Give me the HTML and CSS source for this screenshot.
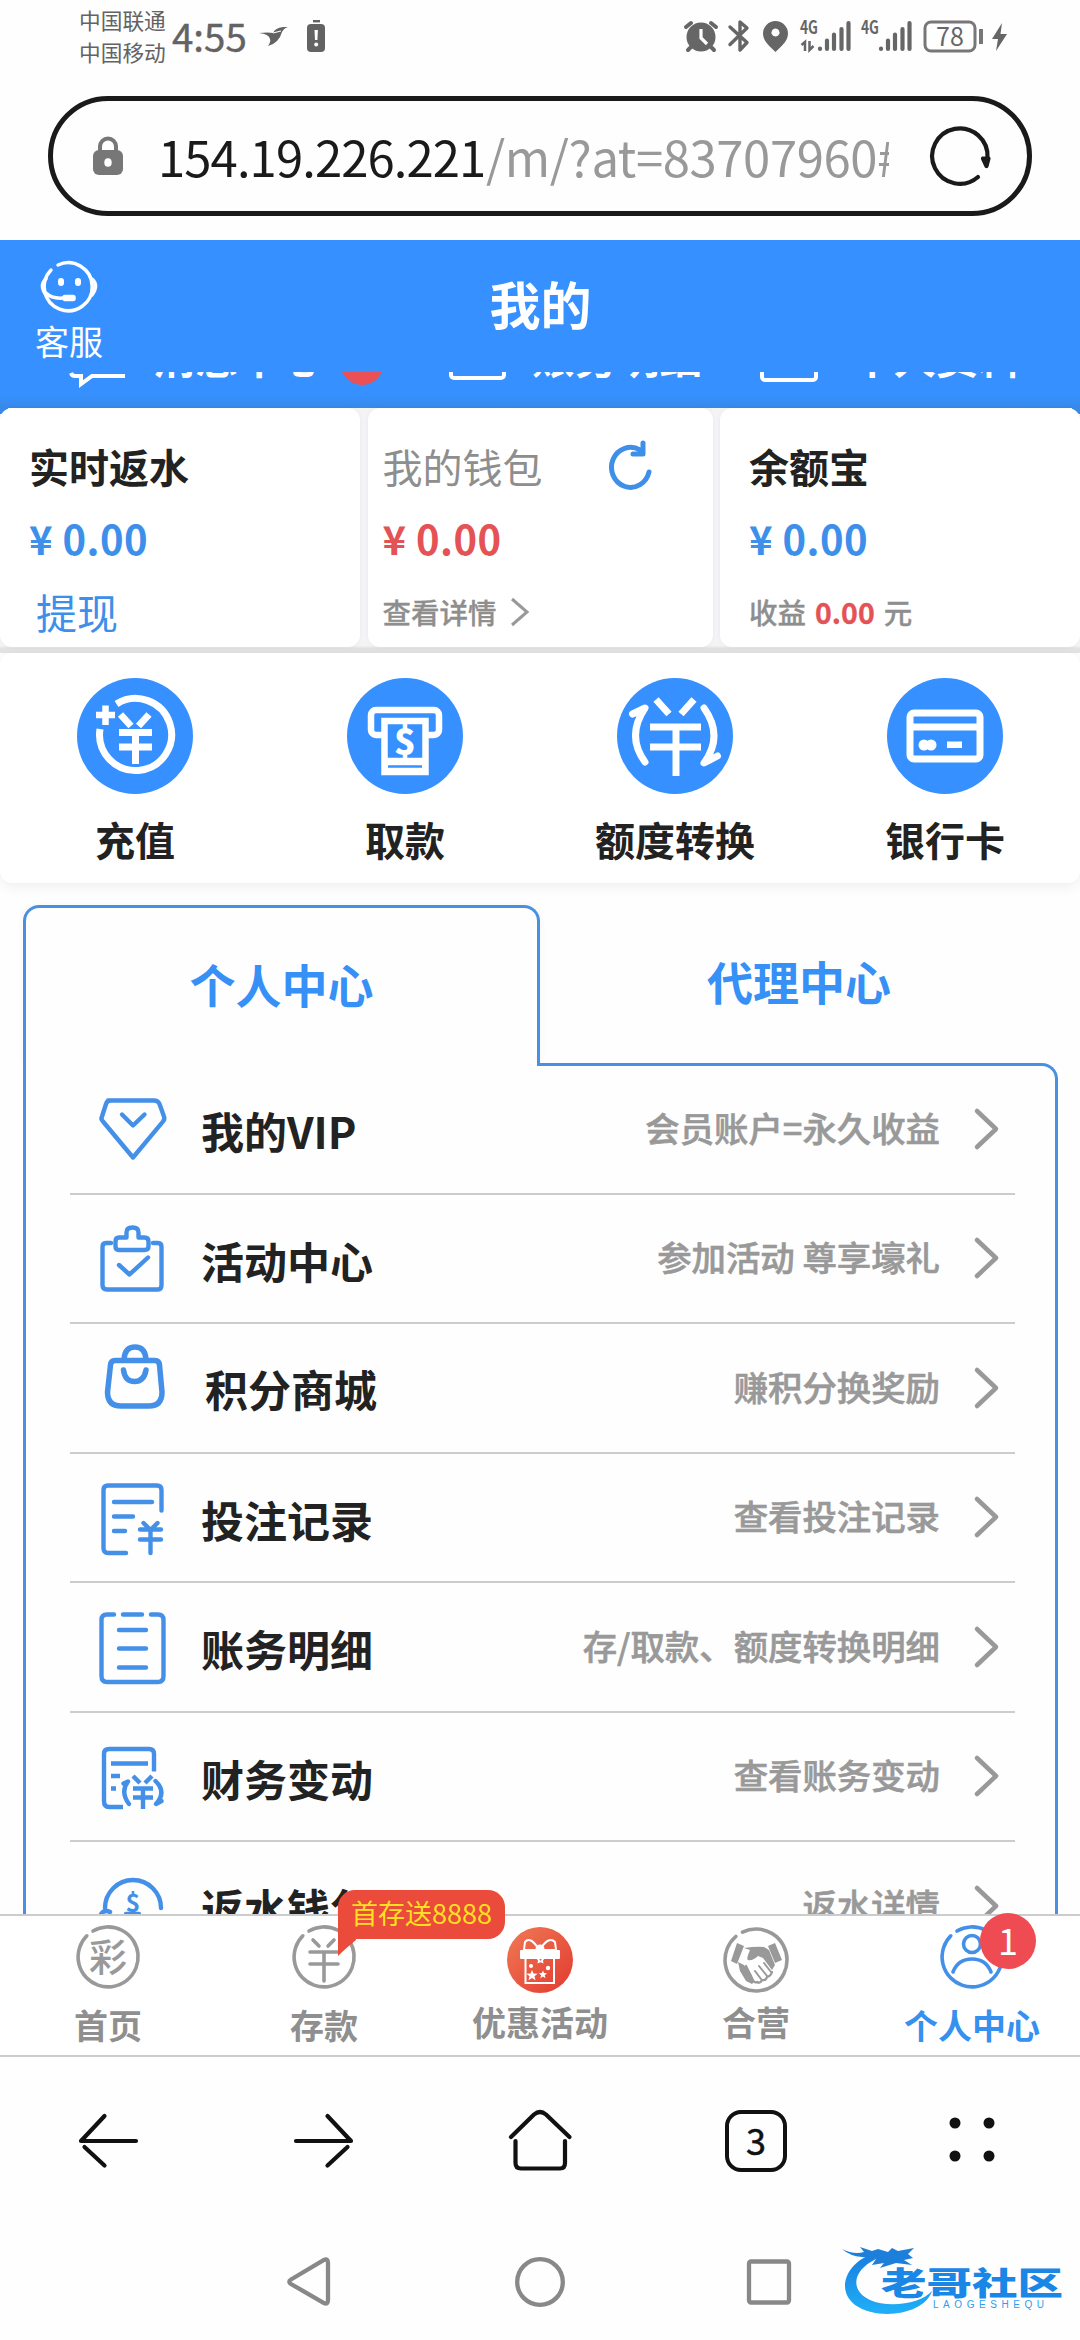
FILE: index.html
```html
<!DOCTYPE html>
<html lang="zh-CN">
<head>
<meta charset="utf-8">
<title>我的</title>
<link rel="stylesheet" href="styles.css">
</head>
<body>
<svg width="0" height="0" class="defs">
  <defs>
    <g id="chev"><path d="M3 3 L22 21 L3 39" fill="none" stroke="#999" stroke-width="4.5" stroke-linecap="round" stroke-linejoin="round"/></g>
    <linearGradient id="gift" x1="0" y1="0" x2="1" y2="1"><stop offset="0" stop-color="#f07a55"/><stop offset="1" stop-color="#e23a30"/></linearGradient>
    <linearGradient id="sea" x1="0" y1="0" x2="0" y2="1"><stop offset="0" stop-color="#1a7fe0"/><stop offset="1" stop-color="#1fb0f8"/></linearGradient>
  </defs>
</svg>

<header class="status">
  <div class="carriers"><span>中国联通</span><span>中国移动</span></div>
  <span class="clock">4:55</span>
  <svg class="status-left" width="90" height="44" viewBox="250 14 90 44" fill="#636363">
    <path d="M259 33 Q268 32 273 33 Q275 28 283 27 L288 27 Q284 28 282 32 Q279 43 268 46 Q271 42 270 39 Q269 34 259 33Z"/>
    <path d="M273 33 L281 31" stroke="#fff" stroke-width="1.2"/>
    <rect x="313" y="20" width="7" height="2.4"/>
    <rect x="307" y="24" width="18" height="28" rx="4"/>
    <path d="M314.500 30h3.400l-.5 10h-2.400z" fill="#fff"/><circle cx="316.200" cy="44.500" r="2" fill="#fff"/>
  </svg>
  <svg class="status-right" width="340" height="44" viewBox="676 14 340 44" fill="#666">
    <circle cx="700" cy="37" r="14.500"/>
    <path d="M685 27l5-4M715 27l-5-4M690 47l-3 3M710 47l3 3" stroke="#666" stroke-width="4" stroke-linecap="round"/>
    <path d="M700 29v9l6 6" fill="none" stroke="#fff" stroke-width="3.200"/>
    <path d="M729 27L746 42.500L739 50V22L746 28L729 44.500" fill="none" stroke="#666" stroke-width="3.400" stroke-linejoin="round" stroke-linecap="round"/>
    <path fill-rule="evenodd" d="M774.500 21a12.500 12.500 0 0 1 12.500 12.500c0 8-8 14-12.500 18.500c-4.500-4.500-12.500-10.500-12.500-18.500a12.500 12.500 0 0 1 12.500-12.500zM774.500 28.500a4 4 0 1 0 .01 0z"/>
    <text x="799" y="34" class="net" textLength="18" lengthAdjust="spacingAndGlyphs">4G</text>
    <text x="860" y="34" class="net" textLength="18" lengthAdjust="spacingAndGlyphs">4G</text>
    <path d="M800.500 45l3.500-3v9M808.500 41v9l4-4" fill="none" stroke="#666" stroke-width="2.500"/>
    <g stroke="#666" stroke-width="4.200" stroke-linecap="round">
      <path d="M819 48.500v.5M826 40.500v8.500M833 34.500v14.500M840.500 29v20M847.500 23v26"/>
      <path d="M880 48.500v.5M887 40.500v8.500M894 34.500v14.500M901.500 29v20M908.500 23v26"/>
    </g>
    <rect x="924" y="22" width="50" height="29" rx="6" fill="none" stroke="#777" stroke-width="3"/>
    <text x="949" y="46" class="batt" text-anchor="middle">78</text>
    <path d="M980 29v15" stroke="#777" stroke-width="4"/>
    <path d="M1001 23L991 39h6l-2 12l11-17h-6.500z"/>
  </svg>
</header>

<div class="address">
  <svg width="32" height="40" viewBox="0 0 32 40"><path d="M8 16V10.500a8 8 0 0 1 16 0V16" fill="none" stroke="#777" stroke-width="4"/><rect x="1" y="14" width="30" height="25" rx="6" fill="#777"/><ellipse cx="16" cy="26.500" rx="3.700" ry="4.300" fill="#fff"/></svg>
  <div class="url"><span class="host">154.19.226.221</span><span class="path">/m/?at=83707960#</span></div>
  <svg width="64" height="64" viewBox="0 0 64 64" fill="none" stroke="#1a1a1a" stroke-width="4.200" stroke-linecap="round"><path d="M50 53A27.700 27.700 0 1 1 59.500 34"/><path d="M55 34.500H60.500L58.500 42Z" fill="#1a1a1a" stroke-linejoin="round"/></svg>
</div>

<section class="topbar">
  <div class="service">
    <svg width="60" height="54" viewBox="0 0 60 54" fill="none" stroke="#fff" stroke-width="3.500" stroke-linecap="round"><path d="M19 5A24 24 0 1 1 12 10"/><path d="M7 19Q0 25 7 35M53 19Q60 25 53 35M7 33Q13 39 24 38"/><path d="M22 21v2M39 21v2" stroke-width="6"/><rect x="25" y="36.500" width="10" height="3" rx="1" fill="#fff"/></svg>
    <span>客服</span>
  </div>
  <h1>我的</h1>
</section>

<main class="page">
  <div class="quick">
    <div class="quick-in">
      <svg class="q0" width="60" height="60" viewBox="0 0 60 60" fill="none" stroke="#fff" stroke-width="4"><path d="M4 42Q5 45 8 45H14V53L25 45H58"/></svg>
      <span class="q1">消息中心</span><i></i>
      <svg class="q2" width="60" height="60" viewBox="0 0 60 60" fill="none" stroke="#fff" stroke-width="4"><rect x="3" y="6" width="53" height="41" rx="3"/></svg>
      <span class="q3">账务明细</span>
      <svg class="q4" width="60" height="60" viewBox="0 0 60 60" fill="none" stroke="#fff" stroke-width="4"><rect x="3" y="8" width="54" height="41" rx="3"/><path d="M15 39h6M36 39h6"/></svg>
      <span class="q5">个人资料</span>
    </div>
  </div>

  <div class="wallets">
    <div class="card"><h2>实时返水</h2><b class="amt">¥ 0.00</b><a class="draw">提现</a></div>
    <div class="card mid">
      <h2>我的钱包<svg width="48" height="52" viewBox="0 0 48 52" fill="none" stroke="#3d8fea" stroke-width="5" stroke-linecap="round"><path d="M43 32A19 20 0 1 1 34 10"/><path d="M37 3V14H27" stroke-linejoin="round"/></svg></h2>
      <b class="amt red">¥ 0.00</b>
      <p>查看详情<svg width="20" height="30" viewBox="0 0 20 30" fill="none" stroke="#999" stroke-width="3"><path d="M2 2L17 15L2 28"/></svg></p>
    </div>
    <div class="card last"><h2>余额宝</h2><b class="amt">¥ 0.00</b><p>收益 <em>0.00</em> 元</p></div>
  </div>

  <div class="actions">
    <div><svg viewBox="0 0 116 116" width="116" height="116"><circle cx="58" cy="58" r="58" fill="#3690ff"/><g fill="none" stroke="#fff" stroke-width="7"><path d="M39.500 26A36 36 0 1 1 23 51"/><path d="M19 37h19M28.500 27.500v19.500" stroke-width="6.500"/><path d="M43.500 36.500L54 48M72 36.500L61.500 48M42 54.500h33M42 69h33M58.500 54v32"/></g></svg><span>充值</span></div>
    <div><svg viewBox="0 0 116 116" width="116" height="116"><circle cx="58" cy="58" r="58" fill="#3690ff"/><g fill="none" stroke="#fff" stroke-width="6.500"><path d="M36 57H29a5 5 0 0 1-5-5V37a5 5 0 0 1 5-5H87a5 5 0 0 1 5 5V52a5 5 0 0 1-5 5H80"/><path d="M37.500 43H78.500V94H37.500zM37 83h42" /></g><path d="M37 81h42v15.500h-42z" fill="#fff"/><path d="M41 88.500h34" stroke="#3690ff" stroke-width="2.500"/><text class="dollar" x="58" y="76.500" text-anchor="middle">$</text></svg><span>取款</span></div>
    <div><svg viewBox="0 0 116 116" width="116" height="116"><circle cx="58" cy="58" r="58" fill="#3690ff"/><g fill="none" stroke="#fff" stroke-width="7"><path d="M39 21.500L52 36M77 21.500L64 36M33 49h51M33 69h51M59 49v49"/><g stroke-linecap="round" stroke-linejoin="round"><path d="M28 84Q9 58 28 30L15.500 36M87 30Q107 58 87 85L100.500 78"/></g></g></svg><span>额度转换</span></div>
    <div><svg viewBox="0 0 116 116" width="116" height="116"><circle cx="58" cy="58" r="58" fill="#3690ff"/><rect x="23" y="35" width="70" height="46" rx="4" fill="none" stroke="#fff" stroke-width="7"/><path d="M24 49h68" stroke="#fff" stroke-width="7"/><g fill="#fff"><circle cx="37" cy="67" r="5.500"/><circle cx="44" cy="67" r="5.500"/><rect x="60" y="63.500" width="15" height="6.500"/></g></svg><span>银行卡</span></div>
  </div>

  <div class="tabs"><div class="tab on">个人中心</div><div class="tab off">代理中心</div></div>

  <div class="panel">
    <div class="edge"><div class="edge-l"></div><div class="edge-r"></div></div>
    <ul class="menu">
      <li><svg class="ico" viewBox="92 1085 84 90"><path d="M108 1101.500H154Q158 1101.500 159.500 1105L164 1117.500Q165 1120 163 1122.500L133 1158.500L103 1122.500Q100.500 1120 102 1117.500L106 1105Q107 1101.500 111 1101.500"/><path d="M122 1115.500L133 1126.500L144.500 1115.500"/></svg><b>我的VIP</b><span>会员账户=永久收益</span><svg class="chev"><use href="#chev"/></svg></li>
      <li><svg class="ico" viewBox="92 1213 84 90"><path d="M111 1243H106Q102.500 1243 102.500 1247V1285Q102.500 1289.500 107 1289.500H158Q161.500 1289.500 161.500 1285V1247Q161.500 1243 158 1243H153"/><path d="M119 1237.500h7.500v-5q0-5 6-5t6 5v5h6q4 0 4 4v5q0 3.500-4 3.500h-25.500q-3.500 0-3.500-3.500v-5q0-4 3.500-4z"/><path d="M119 1265L129.500 1274.500L148 1257.500"/></svg><b>活动中心</b><span>参加活动 尊享壕礼</span><svg class="chev"><use href="#chev"/></svg></li>
      <li class="mall"><svg class="ico" viewBox="92 1343 84 90"><path stroke-width="5.500" d="M115 1360.500H155Q159 1360.500 159.500 1365L162 1392Q162 1406 149 1406H121Q107.500 1406 107.500 1392L110.500 1365Q111 1360.500 115 1360.500zM124 1359Q125 1347 135 1347T146 1359M123.500 1370Q125 1381.500 134.500 1381.500T146 1370"/></svg><b>积分商城</b><span>赚积分换奖励</span><svg class="chev"><use href="#chev"/></svg></li>
      <li><svg class="ico" viewBox="92 1472 84 90"><path d="M161.500 1510.500V1490Q161.500 1485.500 157 1485.500H108Q103.500 1485.500 103.500 1490V1548Q103.500 1553 108 1553H126M114 1502h38M114 1516.500h19M114 1531h11M143.500 1523l7 7l7-7M140 1529.500h21M140 1539.500h21M150.500 1530v23"/></svg><b>投注记录</b><span>查看投注记录</span><svg class="chev"><use href="#chev"/></svg></li>
      <li><svg class="ico" viewBox="92 1602 84 90"><path d="M114 1614.500H107Q101.500 1614.500 101.500 1620V1676Q101.500 1682 107 1682H158Q163.500 1682 163.500 1676V1620Q163.500 1614.500 158 1614.500H151M123 1614.500h19M119 1630h27M119 1648.500h27M119 1667.500h27"/></svg><b>账务明细</b><span>存/取款、额度转换明细</span><svg class="chev"><use href="#chev"/></svg></li>
      <li><svg class="ico butt" viewBox="92 1731 84 90"><path d="M154 1771.500V1754Q154 1749 149 1749H109Q104 1749 104 1754V1801Q104 1807 109 1807H123M111 1763.500h37M111 1776h9M111 1788.500h5M133 1776l7 7M152 1776l-7 7M133 1788.500h20M133 1797.500h20M143 1788v21"/><path stroke-linecap="round" stroke-linejoin="round" d="M129 1804Q120 1792 128 1781.500L123.500 1783.500M155.500 1781Q167 1792 156 1804L161.500 1801"/></svg><b>财务变动</b><span>查看账务变动</span><svg class="chev"><use href="#chev"/></svg></li>
      <li><svg class="ico" viewBox="92 1861 84 90"><path d="M105 1908A28 28 0 1 1 161 1908M101 1914q4-5 9-2M126 1914h13"/><text x="133" y="1911.500" text-anchor="middle">$</text></svg><b>返水钱包</b><span>返水详情</span><svg class="chev"><use href="#chev"/></svg></li>
    </ul>
  </div>
</main>

<nav class="tabbar">
  <div><svg viewBox="0 0 68 68" class="nic"><path d="M19 7A30 30 0 1 1 12.800 11.800"/><text x="34" y="46.500" text-anchor="middle">彩</text></svg><span class="low">首页</span></div>
  <div><svg viewBox="0 0 68 68" class="nic"><path d="M19 7A30 30 0 1 1 12.800 11.800M23 16l6 6M44 16l-6 6M20 28h28M20 40h28M34 28v29"/></svg><span class="low">存款</span><em class="promo">首存送8888<svg width="20" height="20" viewBox="0 0 20 20"><path d="M0 0V19Q7 12 18 3V0z" fill="#ea4b3b"/></svg></em></div>
  <div><svg viewBox="0 0 68 68" class="nic"><circle cx="34" cy="36" r="33" fill="url(#gift)" stroke="none"/><g stroke="#fff" stroke-width="2"><path d="M19.500 35V59H48V35"/><path d="M32 24Q24 12 19 18L18 26H32zM35 24Q43 12 49 18L50 26H36z"/><rect x="15" y="27" width="38" height="7" fill="#fff" stroke-linejoin="round"/><circle cx="34" cy="25" r="3.500" fill="#fff"/></g><g fill="#fff" stroke="none"><path d="M26 46l1.500 3.500 4 .3-3 2.500 1 4-3.500-2.200-3.500 2.200 1-4-3-2.500 4-.3zM37 46.500l1 2.500 3 .2-2.300 2 .8 3-2.500-1.700-2.700 1.700.8-3-2.300-2 3-.2zM30 34l3 .5 1.500 2.500 1.500-2.500 3-.5-2 2.500.5 3-3-1.200-3 1.200.5-3z"/><circle cx="25" cy="42" r="2"/><circle cx="42" cy="44" r="2.200"/></g></svg><span>优惠活动</span></div>
  <div><svg viewBox="0 0 68 68" class="nic"><path d="M20.500 8.100A31 31 0 1 1 13.800 12.500"/><g fill="#999" stroke="none"><path d="M15 19l7 3-7 18-6-3zM46 22l7-3 7 17-7 3z"/><path d="M22 24Q35 22 42 23L47 26L53 41L50 46L41 34L36 32Q31 37 26 36Q24 35 28 26z"/><path d="M16 38l6 3 7 9 3 8-2 2-6-3-6-10z"/></g><path d="M24 42l5 10q3 8 6 6q3 2 5-2q4 1 5-3q4-1 5-5" stroke-width="2.200"/><path d="M33 47l6 8M37 42l8 10M42 39l7 9" stroke-width="2"/></svg><span>合营</span></div>
  <div class="me"><svg viewBox="0 0 68 68" class="nic"><path d="M19 7A30 30 0 1 1 12.800 11.800"/><circle cx="34" cy="20" r="8.500"/><path d="M15 48Q20 35 34 35T53 48"/></svg><span class="low">个人中心</span><em class="badge">1</em></div>
</nav>

<div class="browser">
  <svg viewBox="78 2109 60 64" width="60" height="64"><path d="M136 2141H81L104.500 2116M84.500 2147L104.500 2165.500"/></svg>
  <svg viewBox="294 2109 60 64" width="60" height="64"><path d="M296 2141H351L327.500 2116M347.500 2147L327.500 2165.500"/></svg>
  <svg viewBox="506 2108 68 66" width="68" height="66"><path d="M511 2137L534 2114.500Q540 2109.500 546 2114.500L569.500 2137M515.500 2141V2163Q515.500 2168.500 521 2168.500H560Q565 2168.500 565 2163V2141"/></svg>
  <span class="count">3</span>
  <svg viewBox="942 2109 60 64" width="60" height="64"><g fill="#111" stroke="none"><circle cx="955" cy="2123" r="5.500"/><circle cx="989" cy="2123" r="5.500"/><circle cx="955" cy="2156" r="5.500"/><circle cx="989" cy="2156" r="5.500"/></g></svg>
</div>

<footer class="system">
  <svg class="s1" width="50" height="56" viewBox="284 2254 50 56"><path d="M324 2260Q328 2258 328 2263V2300Q328 2305 324 2303L291 2284Q287.500 2281.500 291 2279.500Z"/></svg>
  <svg class="s2" width="52" height="56" viewBox="514 2254 52 56"><circle cx="540" cy="2282" r="22.800"/></svg>
  <svg class="s3" width="50" height="56" viewBox="744 2254 50 56"><rect x="749" y="2261.500" width="40" height="41" rx="2"/></svg>
  <svg class="logo" width="228" height="76" viewBox="840 2242 228 76">
    <path d="M868 2254C848 2262 835 2287 855 2303C878 2319 924 2313 932 2289C922 2301 890 2307 870 2298C849 2288 853 2268 876 2257Z" fill="url(#sea)"/>
    <path d="M842 2247Q854 2253 864 2250L860 2245L872 2249L878 2247L888 2250L892 2246L898 2249L914 2246L908 2252L913 2256L904 2258L912 2263L896 2261L880 2266L884 2261L872 2263L876 2257L862 2255Q850 2254 842 2247Z" fill="#1d7fda"/>
    <text class="lg" x="881" y="2293" textLength="182" lengthAdjust="spacingAndGlyphs">老哥社区</text>
    <text class="sm" x="933" y="2306" textLength="111">LAOGESHEQU</text>
  </svg>
</footer>
</body>
</html>
```
FILE: styles.css
```css
* { box-sizing: border-box; margin: 0; padding: 0; }
body { width: 1080px; height: 2340px; overflow: hidden; background: #fefefe; color: #222; display: flex; flex-direction: column; font-family: "Noto Sans CJK SC", "Noto Sans", sans-serif; }
em, i { font-style: normal; }
svg { flex: none; display: block; overflow: visible; }
.defs { position: absolute; }

.status { height: 96px; display: flex; align-items: flex-start; padding: 4px 0 0 79px; color: #636363; }
.carriers { display: flex; flex-direction: column; font-size: 21.700px; line-height: 32px; width: 93px; }
.clock { font-size: 38.500px; line-height: 40px; width: 75px; margin-top: 11px; white-space: nowrap; -webkit-text-stroke: .4px; }
.status-left { margin: 10px 0 0 3px; }
.status-right { margin: 10px 0 0 337px; }
.net { font: 700 18px "Noto Sans CJK SC", sans-serif; }
.batt { font: 400 25px "Noto Sans CJK SC", sans-serif; }

.address { height: 120px; margin: 0 48px 24px; border: 5px solid #1a1a1a; border-radius: 60px; display: flex; align-items: center; padding: 0 34px 0 39px; }
.url { width: 731px; margin: 0 39px 0 34px; overflow: hidden; white-space: nowrap; font-size: 49px; line-height: 100px; padding-bottom: 1px; }
.host { color: #1a1a1a; display: inline-block; width: 328px; letter-spacing: -.9px; }
.path { color: #999; letter-spacing: -.4px; }

.topbar { height: 132px; background: #3690ff; color: #fff; display: grid; grid-template-columns: 138px 1fr 138px; }
.service { display: flex; flex-direction: column; align-items: center; padding-top: 20px; font-size: 34px; line-height: 48px; }
.service span { margin-top: 3px; }
.topbar h1 { font-size: 51px; line-height: 126px; text-align: center; font-weight: 700; padding-left: 1px; }

.page { height: 1542px; overflow: hidden; flex: none; }
.quick { height: 36px; overflow: hidden; background: linear-gradient(#3690ff 22px, #388ae9); color: #fff; }
.quick-in { display: flex; align-items: center; height: 60px; margin-top: -47px; padding-left: 67px; font-size: 42.500px; font-weight: 700; white-space: nowrap; }
.quick-in svg { margin-top: 12px; }
.q1 { margin-left: 26px; width: 187px; }
.quick i { width: 44px; height: 46px; border-radius: 50%; background: #ea5055; margin-top: 14px; }
.q2 { margin-left: 64px; }
.q3 { margin-left: 24px; width: 173px; }
.q4 { margin-left: 54px; }
.q5 { margin-left: 32px; }

.wallets { display: grid; grid-template-columns: 360px 345px 360px; gap: 7.500px; height: 245px; padding-bottom: 6px; background: linear-gradient(#388ae9 0 6px, transparent 6px) 0 0 / 8px 100% no-repeat, linear-gradient(#388ae9 0 6px, transparent 6px) 100% 0 / 8px 100% no-repeat, linear-gradient(#f4f4f6 238px, #e3e3e3 240px); }
.card { background: #fff; border-radius: 12px; padding: 0 0 0 29px; box-shadow: 0 0 5px #0000000c; display: grid; grid-template-rows: 114px 32px 1fr; }
.card.mid { padding-left: 15px; }
.card h2 { font-size: 40px; line-height: 58px; padding-top: 29px; font-weight: 700; display: flex; }
.mid h2 { font-weight: 400; color: #8e8e8e; }
.mid h2 svg { margin: 3px 0 0 63px; }
.amt { color: #3d8fea; font-size: 40px; line-height: 32px; letter-spacing: .4px; }
.red, .card em { color: #e55255; }
.draw { color: #3d8fea; font-size: 41px; line-height: 60px; padding: 27px 0 0 7px; }
.card p { color: #8e8e8e; font-size: 28.500px; font-weight: 500; line-height: 60px; padding-top: 28px; display: flex; gap: 9px; -webkit-text-stroke: .3px; }
.card p svg { margin: 15px 0 0 4px; }
.card em { font-weight: 700; }

.actions { height: 230px; border-radius: 12px; background: #fff; box-shadow: 0 3px 14px #00000012; display: grid; grid-template-columns: repeat(4, 1fr); text-align: center; }
.actions div { display: flex; flex-direction: column; align-items: center; padding-top: 25px; font-size: 40px; font-weight: 700; line-height: 60px; }
.actions span { margin-top: 15px; }
.dollar { font: 900 36px "Noto Sans CJK SC", sans-serif; fill: #fff; }

.tabs { margin: 22px 23px 0; height: 158px; display: grid; grid-template-columns: 517px 1fr; font-size: 46px; font-weight: 700; color: #3690f6; text-align: center; }
.tab.on { line-height: 150px; border: 3px solid #4a90e2; border-bottom: 0; border-radius: 16px 16px 0 0; box-shadow: 0 0 8px #0000000a; }
.tab.off { line-height: 150px; padding-left: 1px; }
.panel { margin: 0 22px 0 23px; }
.edge { height: 20px; display: grid; grid-template-columns: 514px 1fr; }
.edge-l { border-left: 3px solid #4a90e2; background: #fefefe; }
.edge-r { border: 3px solid #4a90e2; border-width: 3px 3px 0 0; border-radius: 0 16px 0 0; }
.menu { list-style: none; border: 3px solid #4a90e2; border-width: 0 3px; padding: 0 40px 0 44px; }
.menu li { height: 129.500px; border-bottom: 2px solid #ccc; display: flex; align-items: center; padding-left: 22px; }
.menu li:first-child { height: 111.500px; padding-bottom: 18px; }
.ico { width: 84px; height: 90px; margin-right: 25px; fill: none; stroke: #4490e8; stroke-width: 4.400; stroke-linecap: round; stroke-linejoin: round; }
.ico.butt { stroke-linecap: butt; }
.ico text { font: 700 25px "Noto Sans CJK SC", sans-serif; fill: #4490e8; stroke: none; }
.menu b { font-size: 43px; line-height: 60px; padding-top: 3px; white-space: nowrap; }
.menu .mall b { padding: 0 0 0 4px; }
.menu span { margin-left: auto; font-size: 34.400px; line-height: 50px; color: #999; font-weight: 500; padding-bottom: 4px; white-space: nowrap; -webkit-text-stroke: .6px; }
.chev { width: 26px; height: 42px; margin: 0 15px 0 34px; }

.tabbar { height: 143px; flex: none; background: #fff; border-top: 2px solid #ccc; border-bottom: 2px solid #ccc; display: grid; grid-template-columns: repeat(5, 1fr); position: relative; z-index: 1; }
.tabbar > div { position: relative; display: flex; flex-direction: column; align-items: center; padding-top: 8px; color: #8f8f8f; font-size: 34px; font-weight: 700; }
.nic { width: 68px; height: 68px; fill: none; stroke: #999; stroke-width: 3.600; stroke-linecap: round; }
.nic text { font: 500 38px "Noto Sans CJK SC", sans-serif; fill: #999; stroke: none; }
.tabbar span { line-height: 50px; margin-top: 5px; }
.tabbar .low { margin-top: 8px; }
.tabbar .me { color: #3690f0; }
.me .nic { stroke: #4490e8; }
.promo { position: absolute; left: 122px; top: -26px; width: 167px; height: 49px; border-radius: 17px 17px 17px 0; background: #ea4b3b; color: #ffdf22; font-size: 27px; font-weight: 400; line-height: 46px; text-align: center; white-space: nowrap; z-index: 2; }
.promo svg { position: absolute; left: 0; top: 47px; }
.badge { position: absolute; left: 116px; top: -3px; width: 56px; height: 56px; border-radius: 50%; background: #ee4c52; color: #fff; font-size: 36px; font-weight: 400; line-height: 52px; text-align: center; }

.browser { height: 168px; flex: none; display: grid; grid-template-columns: repeat(5, 1fr); place-items: center; fill: none; stroke: #111; stroke-width: 4.200; stroke-linecap: round; stroke-linejoin: round; }
.count { width: 62px; height: 62px; border: 4px solid #111; border-radius: 16px; font-size: 36px; line-height: 50px; text-align: center; color: #111; -webkit-text-stroke: .5px; }
.system { flex: 1; display: flex; align-items: center; padding: 0 0 2px 284px; fill: none; stroke: #888; stroke-width: 4.300; }
.s2 { margin-left: 180px; }
.s3 { margin-left: 178px; }
.logo { margin-left: 46px; stroke: none; }
.lg { font: 900 32px "Noto Sans CJK SC", sans-serif; fill: #1a86e6; }
.sm { font: 400 10px "Liberation Sans", sans-serif; fill: #2b9ff0; }
```
